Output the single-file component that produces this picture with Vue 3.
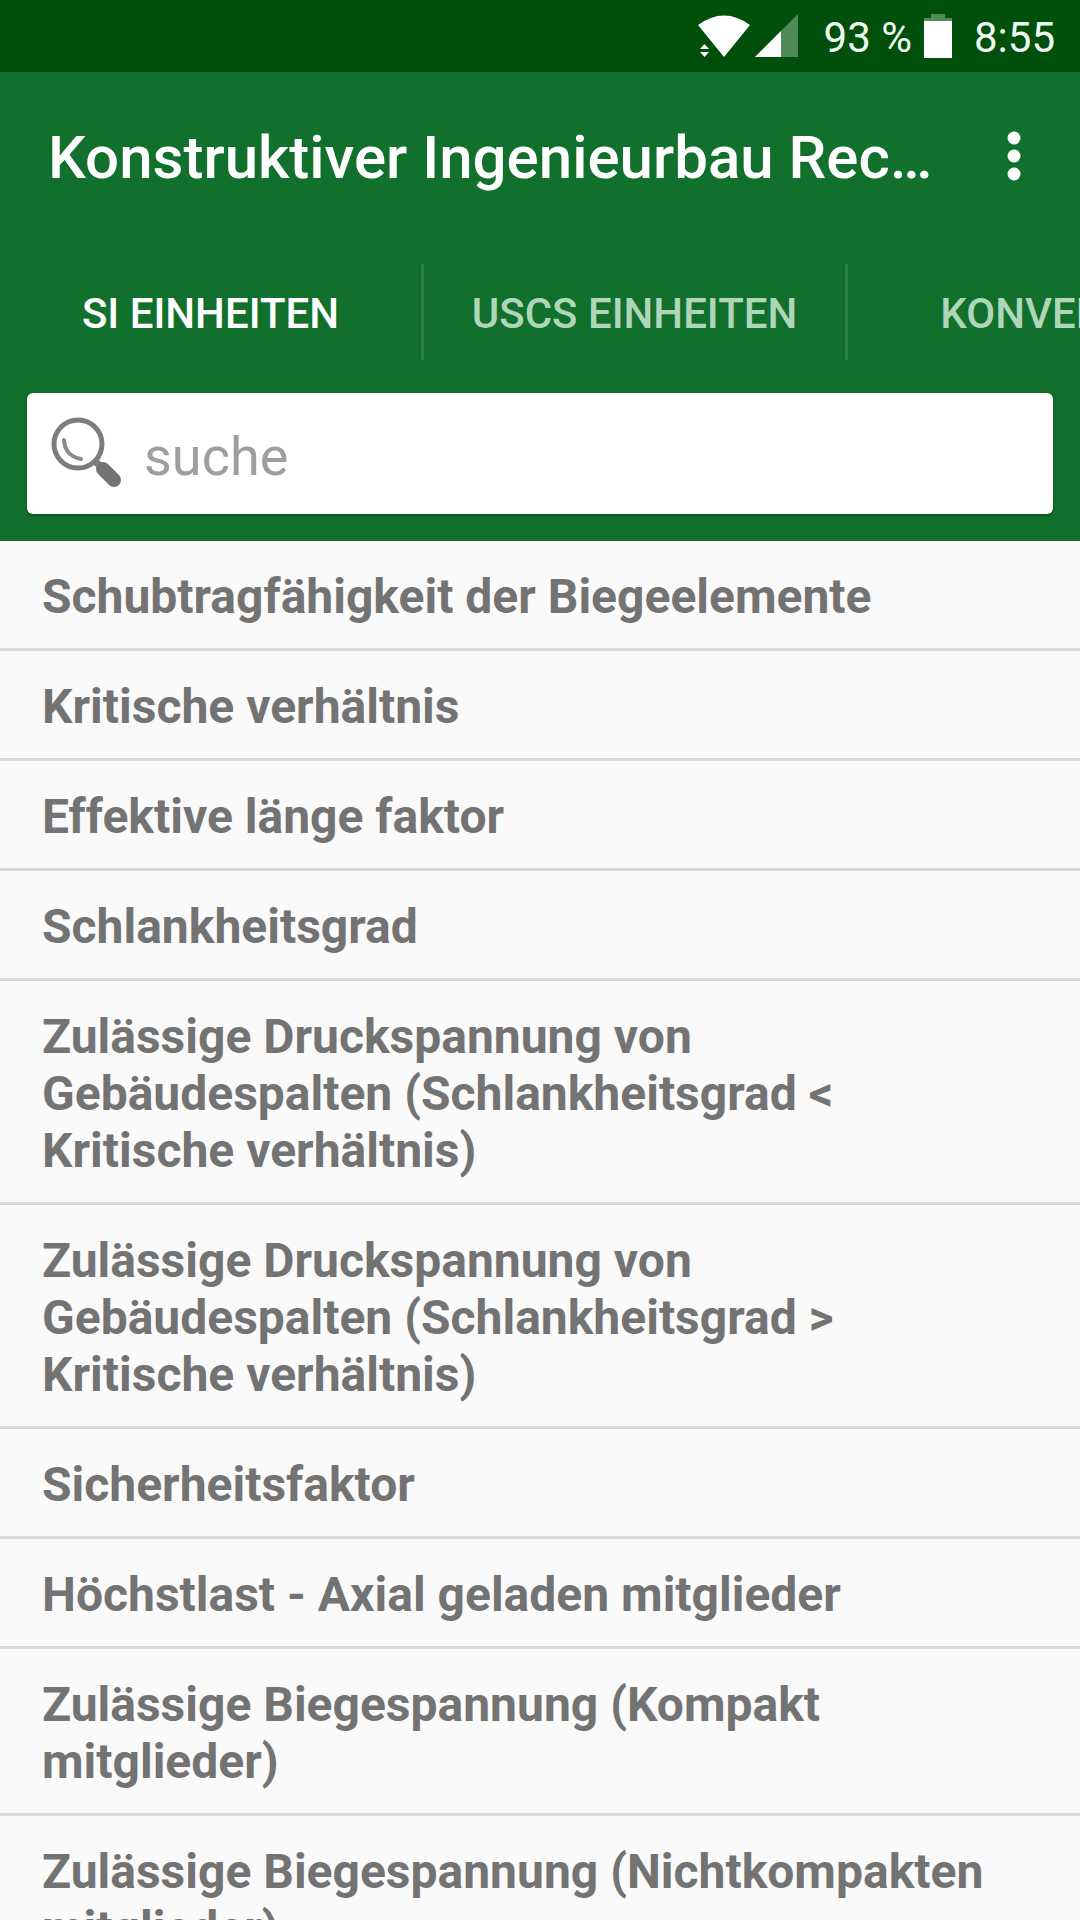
<script setup>
import { ref } from 'vue';

const tabs = ['SI EINHEITEN', 'USCS EINHEITEN', 'KONVERTER'];
const activeTab = ref(0);
const search = ref('');

const items = [
  'Schubtragfähigkeit der Biegeelemente',
  'Kritische verhältnis',
  'Effektive länge faktor',
  'Schlankheitsgrad',
  'Zulässige Druckspannung von Gebäudespalten (Schlankheitsgrad < Kritische verhältnis)',
  'Zulässige Druckspannung von Gebäudespalten (Schlankheitsgrad > Kritische verhältnis)',
  'Sicherheitsfaktor',
  'Höchstlast - Axial geladen mitglieder',
  'Zulässige Biegespannung (Kompakt mitglieder)',
  'Zulässige Biegespannung (Nichtkompakten mitglieder)'
];
</script>

<template>
  <div class="app">
    <!-- Status bar -->
    <div class="status-bar">
      <svg class="wifi" width="54" height="44" viewBox="0 0 54 44" aria-hidden="true">
        <path d="M1 11 Q27 -8 53 11 L27 43 Z" fill="#fff" />
        <path d="M3 35 L7.500 30 L12 35 Z M3 38 L7.500 43 L12 38 Z" fill="#fff" />
      </svg>
      <svg class="signal" width="43" height="44" viewBox="0 0 43 44" aria-hidden="true">
        <path d="M0 43 L43 0 V43 Z" fill="#4f8a58" />
        <path d="M0 43 L26 17 V43 Z" fill="#fff" />
      </svg>
      <span class="battery-level">93 %</span>
      <svg class="battery" width="28" height="44" viewBox="0 0 28 44" aria-hidden="true">
        <path d="M7 0 H21 V4 H28 V7 H0 V4 H7 Z" fill="#4f8a58" />
        <path d="M0 7 H28 V44 H0 Z" fill="#fff" />
      </svg>
      <span class="time">8:55</span>
    </div>

    <!-- Header -->
    <header class="header">
      <div class="toolbar">
        <h1>Konstruktiver Ingenieurbau Rechner</h1>
        <button type="button" class="menu-button" aria-label="Menü">
          <svg width="14" height="50" viewBox="0 0 14 50" aria-hidden="true">
            <circle cx="7" cy="7" r="6.500" fill="#fff" />
            <circle cx="7" cy="25" r="6.500" fill="#fff" />
            <circle cx="7" cy="43" r="6.500" fill="#fff" />
          </svg>
        </button>
      </div>

      <nav class="tabs">
        <button
          v-for="(tab, index) in tabs"
          :key="tab"
          type="button"
          class="tab"
          :class="{ active: index === activeTab }"
          @click="activeTab = index"
        >
          {{ tab }}
        </button>
      </nav>

      <div class="search-box">
        <label for="search" aria-label="suche">
          <svg width="72" height="74" viewBox="0 -1 72 74" aria-hidden="true">
            <circle cx="27" cy="26" r="24" fill="none" stroke="#7d7d7d" stroke-width="5" />
            <path d="M13 22 Q14 38 30 41" fill="none" stroke="#8a8a8a" stroke-width="4" stroke-linecap="round" />
            <path d="M44 43 L50 49" stroke="#7d7d7d" stroke-width="7" />
            <path d="M52 51 L63 62" stroke="#737373" stroke-width="14" stroke-linecap="round" />
          </svg>
        </label>
        <input type="text" id="search" v-model="search" placeholder="suche" />
      </div>
    </header>

    <!-- Formula list -->
    <ul class="list">
      <li v-for="item in items" :key="item">{{ item }}</li>
    </ul>
  </div>
</template>

<style>
body {
  margin: 0;
  background-color: #fafafa;
}
</style>

<style scoped>
.app {
  display: flex;
  flex-direction: column;
  height: 100vh;
  overflow: hidden;
  font-family: Roboto, sans-serif;
  background-color: #fafafa;
}
.status-bar {
  display: flex;
  align-items: center;
  justify-content: flex-end;
  flex: none;
  height: 72px;
  padding-right: 25px;
  background-color: #00500c;
  color: #f0faf0;
  font-size: 42px;
}
.status-bar span {
  padding-top: 2px;
}
.signal {
  margin: 0 26px 0 4px;
}
.battery {
  margin: 0 22px 0 12px;
}
.header {
  flex: none;
  padding-bottom: 27px;
  background-color: #12702d;
}
.toolbar {
  display: flex;
  align-items: center;
  height: 168px;
  padding: 0 24px 0 48px;
}
h1 {
  flex: 1;
  margin: 0 30px 0 0;
  padding-top: 4px;
  min-width: 0;
  overflow: hidden;
  text-overflow: ellipsis;
  white-space: nowrap;
  color: #fff;
  font-size: 60px;
  font-weight: 500;
  line-height: 72px;
}
.menu-button {
  display: flex;
  align-items: center;
  justify-content: center;
  width: 84px;
  height: 120px;
  padding: 0;
  border: none;
  background: none;
  cursor: pointer;
}
.tabs {
  display: flex;
  align-items: center;
  height: 144px;
  overflow: hidden;
}
.tab {
  flex: none;
  width: 424px;
  height: 96px;
  padding: 2px 0 0;
  border: none;
  border-right: 3px solid #2c8044;
  background: none;
  color: #b0d6ba;
  font-family: inherit;
  font-size: 42px;
  font-weight: 500;
  cursor: pointer;
}
.tab.active {
  color: #fff;
}
.search-box {
  display: flex;
  align-items: center;
  height: 121px;
  margin: 9px 27px 0;
  padding: 0 24px;
  box-sizing: border-box;
  border-radius: 6px;
  background-color: #fff;
  box-shadow: 0 1px 3px rgba(0, 0, 0, 0.4);
}
.search-box label {
  display: flex;
}
.search-box input {
  flex: 1;
  min-width: 0;
  height: 78px;
  margin-left: 21px;
  padding: 6px 0 0;
  box-sizing: border-box;
  border: none;
  outline: none;
  background: none;
  color: #333;
  font-family: inherit;
  font-size: 54px;
}
.search-box input::placeholder {
  color: #9e9e9e;
}
.list {
  flex: 1;
  min-height: 0;
  margin: 0;
  padding: 0;
  overflow-y: auto;
  scrollbar-width: none;
  list-style: none;
}
.list li {
  padding: 27px 48px 23px 42px;
  border-bottom: 3px solid #dadada;
  color: #737373;
  font-size: 48px;
  font-weight: 700;
  line-height: 57px;
}
</style>
